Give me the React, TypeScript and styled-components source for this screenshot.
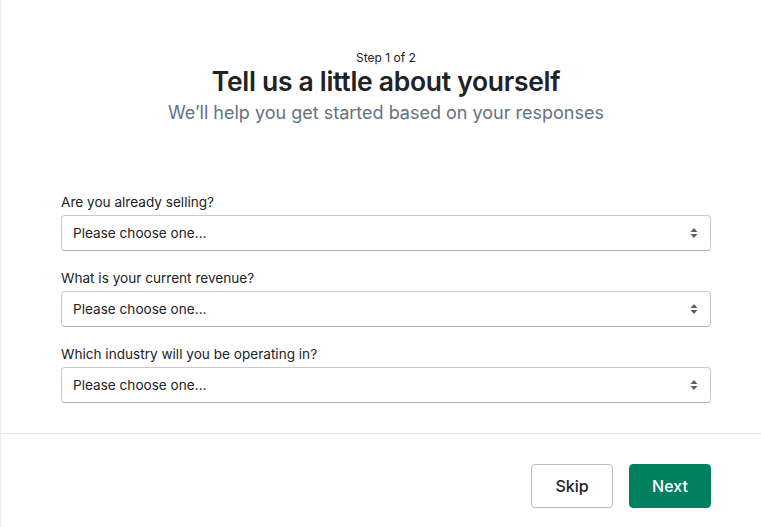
import styled, { createGlobalStyle } from "styled-components";

const GlobalStyle = createGlobalStyle`
	html, body {
		margin: 0;
		padding: 0;
		background: #ffffff;
	}
	body {
		font-family: Inter, "Liberation Sans", sans-serif;
		color: #202223;
	}
`;

const Frame = styled.div`
	width: 761px;
	height: 527px;
	box-sizing: border-box;
	border-left: 1px solid #ebebeb;
	display: flex;
	flex-direction: column;
	overflow: hidden;
`;

const Body = styled.div`
	padding: 50px 50px 0 60px;
	height: 433px;
	box-sizing: border-box;
`;

const Header = styled.header`
	display: flex;
	flex-direction: column;
	align-items: center;
	text-align: center;
	margin-bottom: 68px;
`;

const Step = styled.div`
	font-size: 12px;
	line-height: 16px;
	color: #202223;
`;

const Title = styled.h1`
	margin: 0;
	font-size: 26.5px;
	font-weight: 600;
	line-height: 30px;
	letter-spacing: -0.3px;
	color: #202223;
`;

const Subtitle = styled.p`
	margin: 5px 0 0;
	font-size: 18px;
	line-height: 24px;
	color: #637381;
`;

const Form = styled.div`
	display: flex;
	flex-direction: column;
	gap: 18px;
`;

const Field = styled.label`
	display: flex;
	flex-direction: column;
	gap: 4px;
`;

const Label = styled.span`
	font-size: 13.6px;
	line-height: 18px;
	color: #202223;
`;

const SelectBox = styled.div`
	height: 36px;
	box-sizing: border-box;
	border: 1px solid #c9cccf;
	border-bottom-color: #aeb4b9;
	border-radius: 4px;
	padding: 0 12px 0 11px;
	display: flex;
	align-items: center;
	justify-content: space-between;
	font-size: 13.6px;
	color: #202223;
`;

const Footer = styled.footer`
	border-top: 1px solid #e1e3e5;
	padding: 30px 50px 0 0;
	display: flex;
	justify-content: flex-end;
	gap: 16px;
`;

const Button = styled.button<{ primary?: boolean }>`
	height: 44px;
	min-width: 82px;
	padding: 0 16px;
	border-radius: 4px;
	font-family: inherit;
	font-size: 16px;
	font-weight: 500;
	cursor: pointer;
	border: 1px solid ${(p) => (p.primary ? "#008060" : "#babfc3")};
	background: ${(p) => (p.primary ? "#008060" : "#ffffff")};
	color: ${(p) => (p.primary ? "#ffffff" : "#202223")};
`;

function Arrows() {
	return (
		<svg width="8" height="12" viewBox="0 0 8 12" fill="#5c5f62">
			<path d="M4 1 L7.5 5 H0.5 Z" />
			<path d="M4 11 L0.5 7 H7.5 Z" />
		</svg>
	);
}

const questions = [
	"Are you already selling?",
	"What is your current revenue?",
	"Which industry will you be operating in?",
];

export default function App() {
	return (
		<>
			<GlobalStyle />
			<Frame>
				<Body>
					<Header>
						<Step>Step 1 of 2</Step>
						<Title>Tell us a little about yourself</Title>
						<Subtitle>We’ll help you get started based on your responses</Subtitle>
					</Header>
					<Form>
						{questions.map((q) => (
							<Field key={q}>
								<Label>{q}</Label>
								<SelectBox>
									<span>Please choose one...</span>
									<Arrows />
								</SelectBox>
							</Field>
						))}
					</Form>
				</Body>
				<Footer>
					<Button>Skip</Button>
					<Button primary>Next</Button>
				</Footer>
			</Frame>
		</>
	);
}
